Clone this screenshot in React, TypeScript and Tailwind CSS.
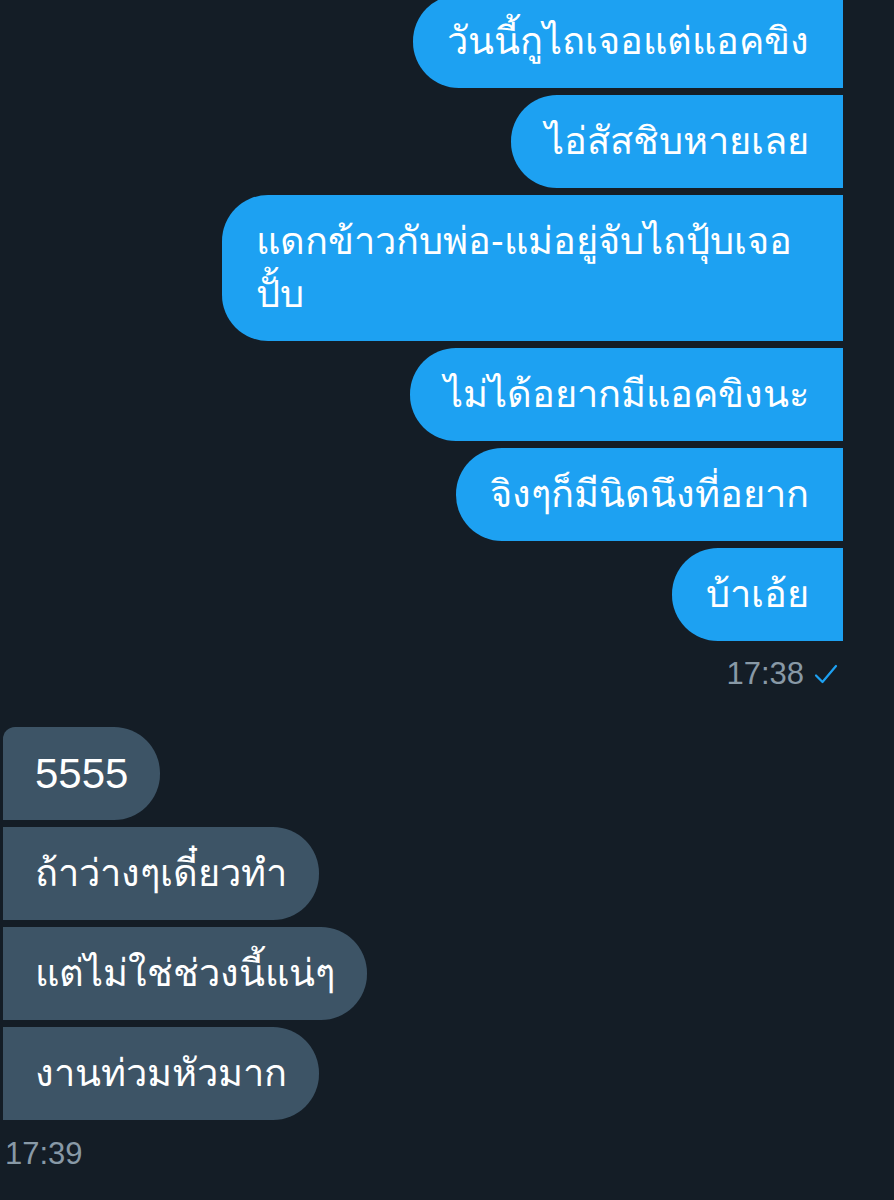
const sent = [
  "วันนี้กูไถเจอแต่แอคขิง",
  "ไอ่สัสชิบหายเลย",
  "แดกข้าวกับพ่อ-แม่อยู่จับไถปุ้บเจอปั้บ",
  "ไม่ได้อยากมีแอคขิงนะ",
  "จิงๆก็มีนิดนึงที่อยาก",
  "บ้าเอ้ย",
];

const received = ["5555", "ถ้าว่างๆเดี๋ยวทำ", "แต่ไม่ใช่ช่วงนี้แน่ๆ", "งานท่วมหัวมาก"];

function Check() {
  return (
    <svg width="24" height="22" viewBox="0 0 24 22" fill="none" className="text-[#1da1f2]">
      <path d="M2 12.5 L8.5 19 L22 3" stroke="currentColor" strokeWidth="2.2" strokeLinecap="round" strokeLinejoin="round" />
    </svg>
  );
}

export default function App() {
  return (
    <div
      className="w-[894px] h-[1200px] overflow-hidden bg-[#141d26] text-white"
      style={{ fontFamily: '"Liberation Sans", "Noto Sans", "DejaVu Sans", sans-serif' }}
    >
      <div className="flex flex-col items-end gap-[7px] pr-[51px] -mt-[5px]">
        {sent.map((t) => (
          <div
            key={t}
            className="max-w-[621px] bg-[#1da1f2] rounded-l-[46px] px-[34px] py-[20px] text-[38px] leading-[53px]"
          >
            {t}
          </div>
        ))}
        <div className="flex items-center gap-[10px] mt-[3px] mr-[5px] text-[31px] text-[#8899a6]">
          <span>17:38</span>
          <Check />
        </div>
      </div>

      <div className="flex flex-col items-start gap-[7px] pl-[3px] mt-[29px]">
        {received.map((t, i) => (
          <div
            key={t}
            className={
              "bg-[#3d5466] rounded-r-[46px] px-[32px] py-[20px] leading-[53px] " +
              (i === 0 ? "rounded-tl-[12px] text-[42px]" : "text-[38px]")
            }
          >
            {t}
          </div>
        ))}
        <div className="mt-[4px] ml-[2px] text-[31px] text-[#8899a6]">17:39</div>
      </div>
    </div>
  );
}
